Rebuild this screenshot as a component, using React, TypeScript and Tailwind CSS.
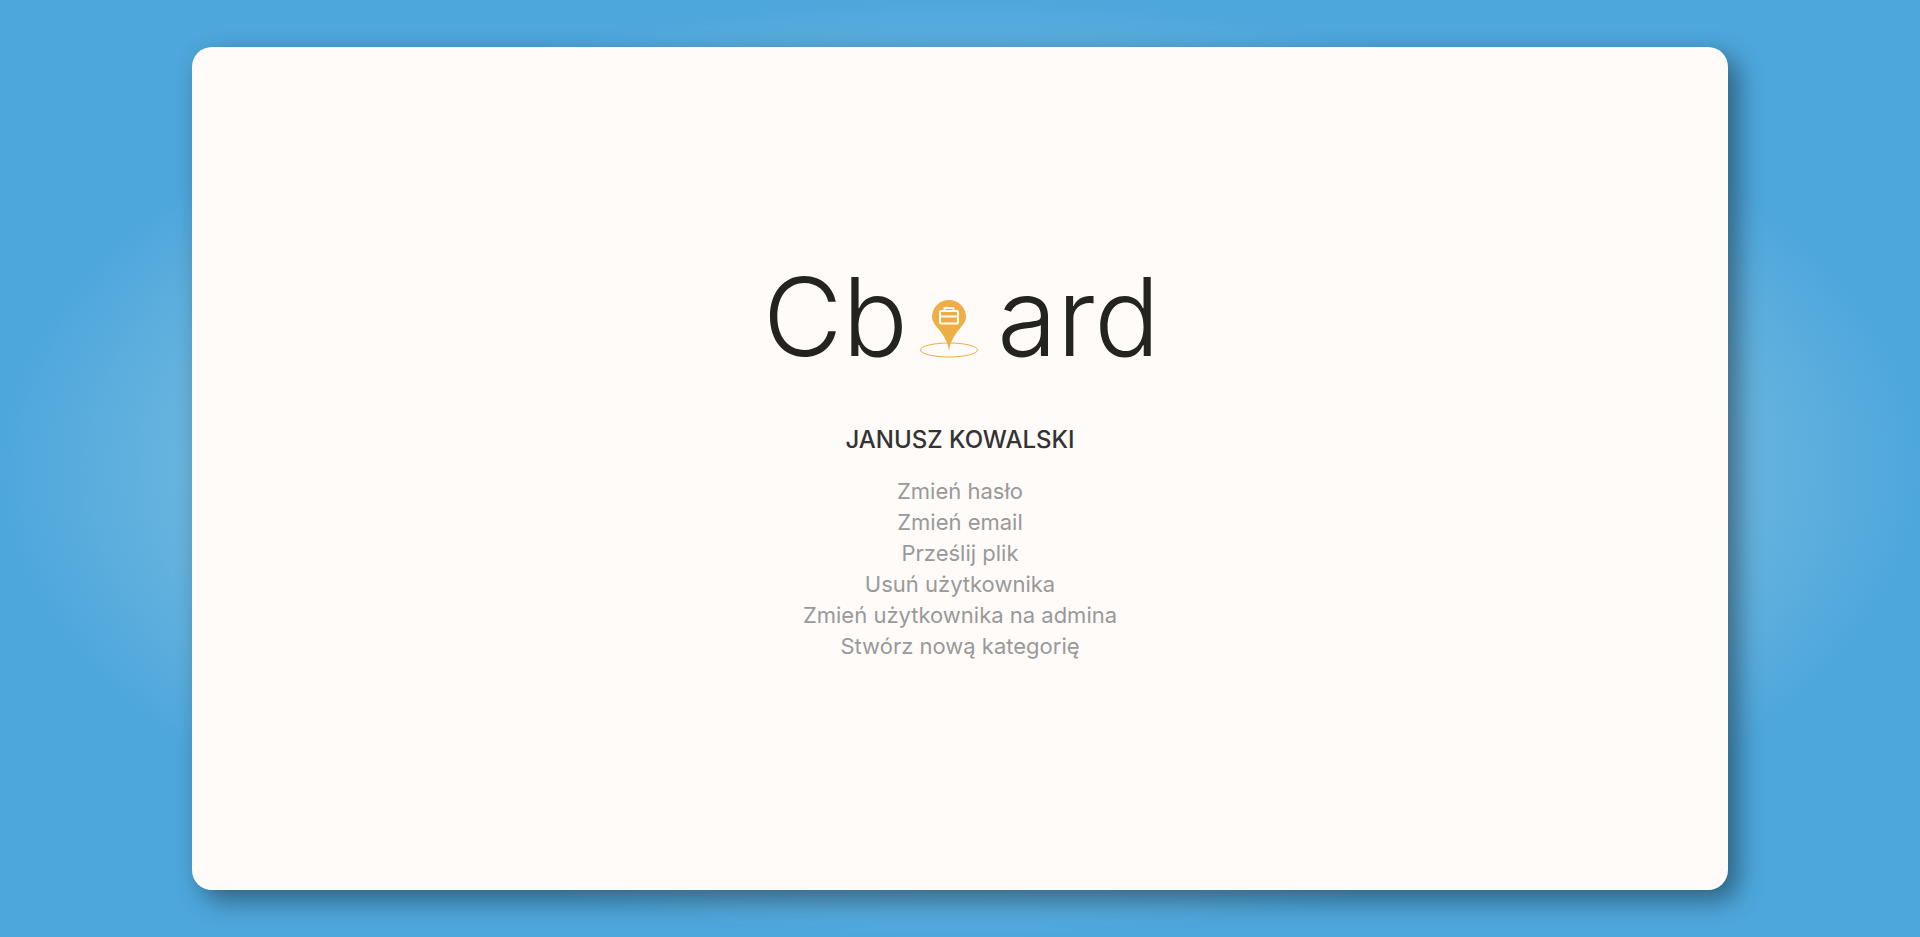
const actions = [
  "Zmień hasło",
  "Zmień email",
  "Prześlij plik",
  "Usuń użytkownika",
  "Zmień użytkownika na admina",
  "Stwórz nową kategorię",
];

function Logo() {
  return (
    <svg
      role="img"
      aria-label="Cboard"
      viewBox="0 0 388 84"
      className="w-[388px] max-w-full overflow-visible"
    >
      <g fill="#23231f" fontFamily="Inter, sans-serif" fontWeight="300" fontSize="109">
        <text x="-3" y="82">Cb</text>
        <text x="394" y="82" textAnchor="end">ard</text>
      </g>
      <ellipse cx="183" cy="76" rx="28.5" ry="7" fill="none" stroke="#ecae45" strokeWidth="1" />
      <path
        d="M183 77C182 68 177.500 61 172.500 55C169 50.500 166 47.500 166 43A17 17 0 0 1 200 43C200 47.500 197 50.500 193.500 55C188.500 61 184 68 183 77Z"
        fill="#ecae45"
      />
      <g fill="none" stroke="#fffbf9" strokeWidth="2" strokeLinejoin="round">
        <rect x="174" y="37" width="18" height="12.500" rx="1" />
        <path d="M178.500 37V34H187.500V37M174 42.500H192" />
      </g>
    </svg>
  );
}

export default function App() {
  return (
    <main className="flex h-screen items-center justify-center bg-[radial-gradient(ellipse_at_center,#d6e8ea_0%,#4da7dc_71%)] font-[Inter,sans-serif]">
      <section className="flex h-[90%] w-4/5 flex-col items-center justify-center rounded-[20px] bg-[#fffbf9] text-center shadow-[10px_10px_26px_rgba(0,0,0,0.42)]">
        <Logo />
        <h1 className="mt-16 text-[24px] leading-9 font-medium text-[#333333] uppercase">
          Janusz Kowalski
        </h1>
        <ul className="mt-[18px] text-[22px] leading-[31px] text-[#999999]">
          {actions.map((label) => (
            <li key={label}>
              <a href="#">{label}</a>
            </li>
          ))}
        </ul>
      </section>
    </main>
  );
}
